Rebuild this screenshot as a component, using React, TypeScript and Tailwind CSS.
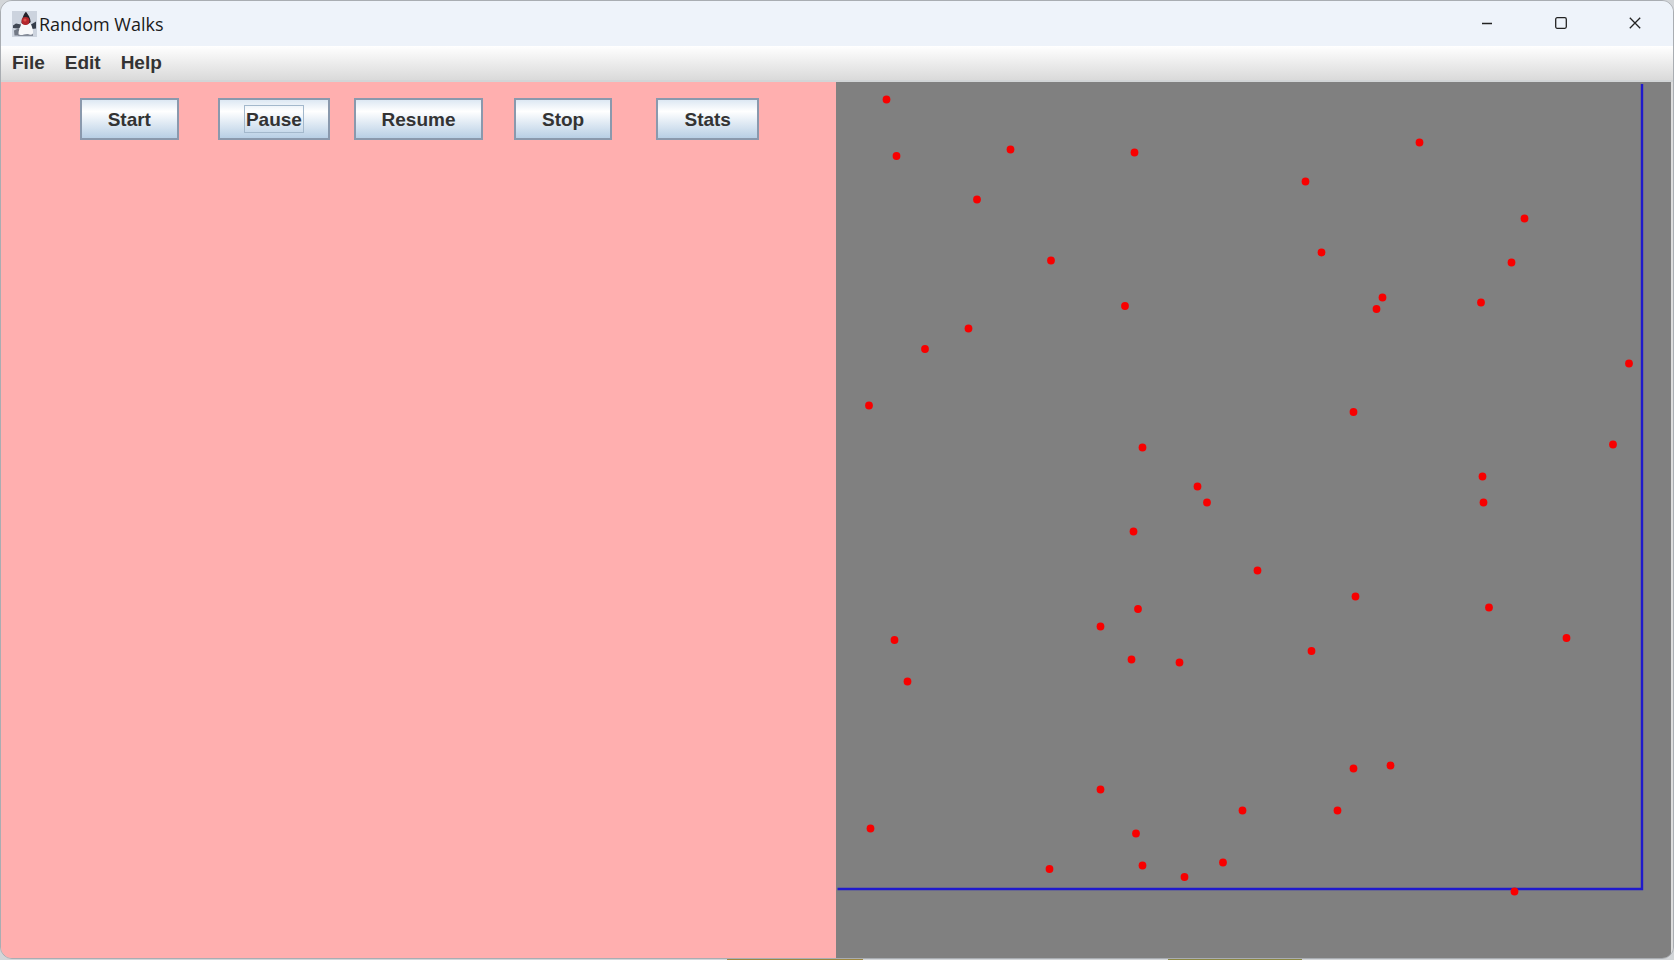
import { useState } from "react";

type Point = [number, number];

const menus = ["File", "Edit", "Help"];
const actions = ["Start", "Pause", "Resume", "Stop", "Stats"];

const walkers: Point[] = [
    [50.5, 17.5], [60.5, 74], [174.5, 67.5], [298.5, 70.5], [141, 117.5],
    [215, 178.5], [289, 224], [132.5, 246.5], [89, 267], [33, 323.5],
    [306.5, 365.5], [583.5, 60.5], [469.5, 99.5], [688.5, 136.5], [485.5, 170.5],
    [675.5, 180.5], [546.5, 215.5], [540.5, 227], [645, 220.5], [793, 281.5],
    [517.5, 330], [777, 362.5], [646.5, 394.5], [361.5, 404.5], [371, 420.5],
    [297.5, 449.5], [302, 527], [264.5, 544.5], [58.5, 558], [71.5, 599.5],
    [295.5, 577.5], [343.5, 580.5], [264.5, 707.5], [406.5, 728.5], [34.5, 746.5],
    [300, 751.5], [306.5, 783.5], [213.5, 787], [348.5, 795], [387, 780.5],
    [421.5, 488.5], [647.5, 420.5], [519.5, 514.5], [653, 525.5], [730.5, 556],
    [475.5, 569], [517.5, 686.5], [554.5, 683.5], [501.5, 728.5], [678.5, 809.5],
];

const DukeIcon = () => (
    <svg width="25" height="26" viewBox="0 0 25 26" aria-hidden="true">
        <rect width="25" height="26" fill="#ccd3de" />
        <path d="M1 14.5 4 12.500l5 1 1.500 2-4.500 2-5-.5z" fill="#414854" />
        <path d="M19 13.500 24 10.500v7l-4 .5z" fill="#343c49" />
        <path d="M2 19.500 7 17l3 7.500H2.500z" fill="#727985" />
        <path d="M9.500 12c-1 4-3.500 8-3 11.500 3 1.500 6.500-.5 9 0 2.500 1 5 1 5.500-.5.500-4-1-8-3-11z" fill="#f7f8fa" />
        <path d="M9.500 12C10 7.500 12 2.500 14 .8c2 2.700 4.500 6.200 4.700 10.200-2 2.500-6.700 3.500-9.200 1z" fill="#24212a" />
        <circle cx="13.500" cy="10" r="4" fill="#b5262c" />
        <circle cx="13" cy="9" r="1.600" fill="#dc5149" />
        <path d="M6 23.500c4 1.500 7-1 10-.5 2 1 3.500 1 5-.5V25H6z" fill="#858c99" />
    </svg>
);

const TitleBar = () => {
    const button = "flex w-[74px] items-center justify-center pb-0.5 hover:bg-gray-200";

    return (
        <header className="flex h-[45px] shrink-0 justify-between bg-[#eef3fa]">
            <div className="flex items-center gap-[2px] pl-[11px]">
                <DukeIcon />
                <h1 className="font-['Open_Sans',sans-serif] text-[18px] leading-6 font-normal text-[#1b1b1b]">Random Walks</h1>
            </div>
            <div className="flex pr-px text-[#222]">
                <button aria-label="Minimize" className={button}>
                    <svg width="12" height="12" viewBox="0 0 12 12" fill="none" stroke="currentColor" strokeWidth="1.300">
                        <path d="M1 6.500h10" />
                    </svg>
                </button>
                <button aria-label="Maximize" className={button}>
                    <svg width="12" height="12" viewBox="0 0 12 12" fill="none" stroke="currentColor" strokeWidth="1.300">
                        <rect x=".7" y=".7" width="10.600" height="10.600" rx="1.500" />
                    </svg>
                </button>
                <button aria-label="Close" className={button}>
                    <svg width="12" height="12" viewBox="0 0 12 12" fill="none" stroke="currentColor" strokeWidth="1.300">
                        <path d="m.8.8 10.400 10.400M11.200.8.8 11.200" />
                    </svg>
                </button>
            </div>
        </header>
    );
};

const App = () => {
    const [focused, setFocused] = useState("Pause");

    return (
        <div className="flex h-screen flex-col bg-[#d3d6d9] font-['Liberation_Sans',Arial,sans-serif] text-[19px] leading-6 font-bold text-[#333]">
            <div className="flex min-h-0 grow flex-col overflow-hidden rounded-xl border border-[#a9adb2]">
                <TitleBar />

                <nav className="flex h-9 shrink-0 items-center gap-5 border-b-2 border-[#d2d5d7] bg-linear-to-b from-white to-[#dadada] pl-[11px]">
                    {menus.map((menu) => (
                        <button key={menu}>{menu}</button>
                    ))}
                </nav>

                <main className="grid min-h-0 grow grid-cols-2 border-r-2 border-[#dcdcdc]">
                    <section className="grid grid-cols-5 content-start justify-items-center bg-[#ffafaf] px-14 pt-4">
                        {actions.map((action) => (
                            <button
                                key={action}
                                onClick={() => setFocused(action)}
                                className="h-[42px] border-2 border-[#8a99ad] bg-linear-to-b from-[#dde8f3] via-white via-30% to-[#b8cfe5] px-6"
                            >
                                <span className={focused === action ? "block border border-[#a3b8cc] px-px pt-0.5" : "block border border-transparent px-px pt-0.5"}>
                                    {action}
                                </span>
                            </button>
                        ))}
                    </section>

                    <section className="min-h-0 bg-[#808080]">
                        <svg className="block h-full w-full" role="img" aria-label="Random walkers">
                            <path d="M1.500 807H806V2" fill="none" stroke="#1f19cc" strokeWidth="2.400" />
                            {walkers.map(([x, y]) => (
                                <circle key={`${x}-${y}`} cx={x} cy={y} r="3.900" fill="#f80000" />
                            ))}
                        </svg>
                    </section>
                </main>
            </div>

            {/* sliver of the desktop under the window */}
            <div className="flex h-px shrink-0">
                <div className="w-[727px]" />
                <div className="w-[136px] bg-[#9d8740]" />
                <div className="w-[305px]" />
                <div className="w-[134px] bg-[#8b8743]" />
            </div>
        </div>
    );
};

export default App;
